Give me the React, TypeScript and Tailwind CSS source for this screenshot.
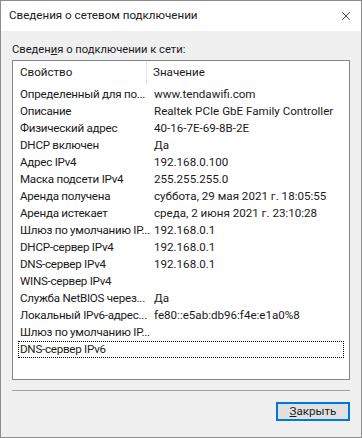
import { X } from 'lucide-react'

const rows: [string, string][] = [
    ['Определенный для по...', 'www.tendawifi.com'],
    ['Описание', 'Realtek PCIe GbE Family Controller'],
    ['Физический адрес', '40-16-7E-69-8B-2E'],
    ['DHCP включен', 'Да'],
    ['Адрес IPv4', '192.168.0.100'],
    ['Маска подсети IPv4', '255.255.255.0'],
    ['Аренда получена', 'суббота, 29 мая 2021 г. 18:05:55'],
    ['Аренда истекает', 'среда, 2 июня 2021 г. 23:10:28'],
    ['Шлюз по умолчанию IP...', '192.168.0.1'],
    ['DHCP-сервер IPv4', '192.168.0.1'],
    ['DNS-сервер IPv4', '192.168.0.1'],
    ['WINS-сервер IPv4', ''],
    ['Служба NetBIOS через...', 'Да'],
    ['Локальный IPv6-адрес...', 'fe80::e5ab:db96:f4e:e1a0%8'],
    ['Шлюз по умолчанию IP...', ''],
    ['DNS-сервер IPv6', ''],
]

export default function App() {
    return (
        <div
            className="w-[362px] h-[438px] border border-[#8c8c8c] bg-[#f0f0f0] flex flex-col text-[12px] text-[#1a1a1a]"
            style={{ fontFamily: 'Roboto, "Liberation Sans", sans-serif' }}
        >
            {/* title bar */}
            <div className="h-[30px] bg-white flex items-center justify-between pl-[8px] pr-[8px] shrink-0">
                <span className="leading-none text-[11.6px]">Сведения о сетевом подключении</span>
                <X size={14} strokeWidth={1.2} className="text-black" />
            </div>

            <div className="flex flex-col px-[11px] pt-[10px]">
                <div className="h-[18px] leading-[18px] text-[11.2px]">
                    Сведен<u>и</u>я о подключении к сети:
                </div>

                <div className="mt-[1px] h-[320px] border border-[#828790] bg-white flex flex-col text-[11.6px]">
                    <div className="h-[23px] flex items-center shrink-0">
                        <div className="w-[134px] pl-[7px] border-r border-[#e5e5e5] h-full flex items-center shrink-0">Свойство</div>
                        <div className="pl-[6px]">Значение</div>
                    </div>
                    <div className="flex flex-col pt-[2px]">
                        {rows.map(([name, value], i) => (
                            <div
                                key={i}
                                className={
                                    i === rows.length - 1
                                        ? 'h-[17px] mx-[5px] flex items-center border border-dotted border-black'
                                        : 'h-[17px] mx-[5px] flex items-center border border-transparent'
                                }
                            >
                                <div className="w-[129px] pl-[1px] whitespace-nowrap shrink-0 tracking-[-0.25px]">{name}</div>
                                <div className="pl-[6px] whitespace-nowrap">{value}</div>
                            </div>
                        ))}
                    </div>
                </div>

                <div className="mt-[10px] border-t border-[#a0a0a0]" />

                <div className="flex justify-end mt-[11px]">
                    <button className="w-[74px] h-[19px] border-2 border-[#0078d7] bg-[#e1e1e1] flex items-center justify-center leading-none text-[11.6px]">
                        <span><u>З</u>акрыть</span>
                    </button>
                </div>
            </div>
        </div>
    )
}
